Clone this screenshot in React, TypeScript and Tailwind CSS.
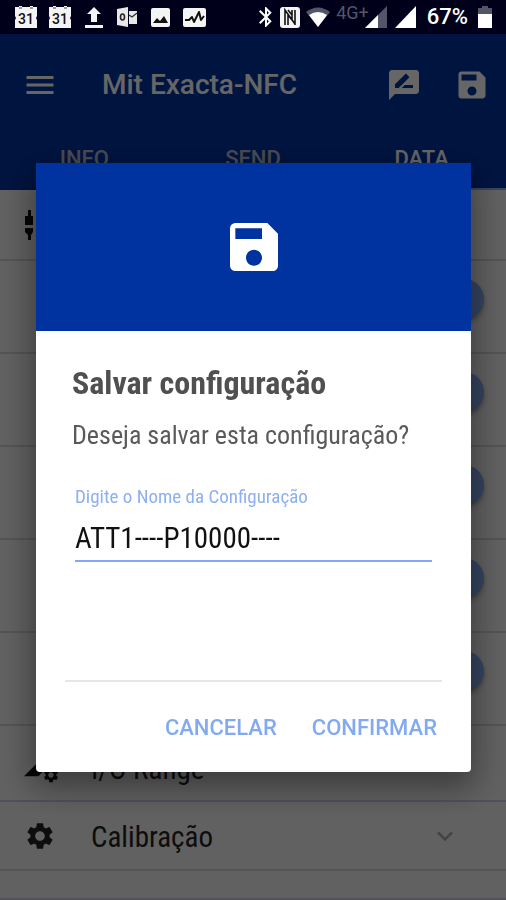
import React from 'react';
import { MdBluetooth, MdKeyboardArrowDown, MdMenu, MdRateReview, MdSave, MdSettings } from 'react-icons/md';

const CalendarIcon: React.FC = () => (
  <svg viewBox="0 0 24 24" className="size-6">
    <path fill="#f4f4f4" d="M1 2h4V1h3v1h8V1h3v1h4v9l-1 2 1 2v8H1v-8l1-2-1-2z" />
    <path fill="#999" d="M5 2h3v2H5zM16 2h3v2h-3z" />
    <text x="12" y="19" textAnchor="middle" fontSize="14" fontWeight="500" fill="#111">
      31
    </text>
  </svg>
);

const UploadIcon: React.FC = () => (
  <svg viewBox="0 0 20 24" className="h-6 w-5" fill="#f4f4f4">
    <path d="M10 2l7 7h-4v8H7V9H3zM1 20h18v3H1z" />
  </svg>
);

const MailIcon: React.FC = () => (
  <svg viewBox="0 0 22 24" className="h-6 w-[22px]">
    <path fill="#e8e8e8" d="M1 4l11-2v20L1 20zM13 6h8v13h-8z" />
    <path fill="none" stroke="#333" strokeWidth="1.4" d="M13 10l3 2 5-4" />
    <ellipse cx="6.5" cy="12" rx="2" ry="3" fill="none" stroke="#222" strokeWidth="1.6" />
  </svg>
);

const PictureIcon: React.FC = () => (
  <svg viewBox="0 0 20 24" className="h-6 w-5">
    <rect x="1" y="3" width="19" height="19" rx="2" fill="#f4f4f4" />
    <path fill="#111" d="M3 18l4-5 3 3 4-5 4 7z" />
  </svg>
);

const PulseIcon: React.FC = () => (
  <svg viewBox="0 0 24 24" className="size-6">
    <rect x="1" y="3" width="23" height="19" rx="2" fill="#f4f4f4" />
    <path fill="none" stroke="#111" strokeWidth="2" strokeLinejoin="round" d="M3 15h4l3-3 2 5 5-10 2 8 3-4" />
  </svg>
);

const NfcIcon: React.FC = () => (
  <svg viewBox="0 0 20 22" className="h-[22px] w-5">
    <rect y="1" width="20" height="21" rx="3" fill="#f4f4f4" />
    <path fill="none" stroke="#111" strokeWidth="1.6" d="M5 19V4l10 14M15 4v15M8 4l4 5v5l-4-5v10M12 4v5" />
  </svg>
);

const WifiIcon: React.FC = () => (
  <svg viewBox="0 0 24 20" className="h-5 w-6">
    <path fill="#55556a" d="M0 5Q12-4 24 5L12 20z" />
    <path fill="#fff" d="M3 8q9-6 18 0l-9 12z" />
  </svg>
);

const StatusBar: React.FC = () => (
  <div className="flex h-[34px] items-center justify-between bg-[#01001a] px-3.5 text-white">
    <div className="flex items-center gap-3">
      <div className="flex gap-2.5">
        <CalendarIcon />
        <CalendarIcon />
      </div>
      <UploadIcon />
      <MailIcon />
      <PictureIcon />
      <PulseIcon />
    </div>
    <div className="flex items-center">
      <MdBluetooth className="mr-0.5 size-6" />
      <NfcIcon />
      <div className="ml-1.5">
        <WifiIcon />
      </div>
      <span className="ml-1.5 self-start text-[18px] leading-4 text-[#55556a]">4G+</span>
      <svg viewBox="0 0 22 22" className="-ml-1 h-[22px] w-[22px]">
        <path fill="#55556a" d="M22 0v22H0z" />
        <path fill="#fff" d="M13 9v13H0z" />
      </svg>
      <svg viewBox="0 0 22 22" className="ml-2 h-[22px] w-[22px]">
        <path fill="#fff" d="M21 0v22H0z" />
      </svg>
      <span className="ml-2.5 text-[22px] leading-6 font-medium">67%</span>
      <svg viewBox="0 0 14 22" className="ml-2.5 h-[22px] w-3.5">
        <path fill="#55556a" d="M4 0h6v2h4v6H0V2h4z" />
        <path fill="#fff" d="M0 8h14v14H0z" />
      </svg>
    </div>
  </div>
);

const tabs = [
  { name: 'INFO', active: false },
  { name: 'SEND', active: false },
  { name: 'DATA', active: true },
];

const Header: React.FC = () => (
  <header className="bg-[#0033a0] text-white">
    <div className="flex h-[102px] items-center pr-4 pl-[22px]">
      <button aria-label="Menu">
        <MdMenu className="size-9" />
      </button>
      <h1 className="ml-11 flex-1 text-[28px] leading-8 font-medium">Mit Exacta-NFC</h1>
      <button aria-label="Renomear">
        <MdRateReview className="size-9" />
      </button>
      <button aria-label="Salvar" className="ml-8">
        <MdSave className="size-9" />
      </button>
    </div>
    <nav className="grid grid-cols-3">
      {tabs.map((tab) => (
        <a
          key={tab.name}
          href="#"
          className={
            tab.active
              ? 'flex h-[54px] justify-center border-b-2 border-[#8cb0f5] pt-[11px] text-[22px] leading-6 font-medium'
              : 'flex h-[54px] justify-center pt-[11px] text-[22px] leading-6 font-medium text-[#b4bccb]'
          }
        >
          {tab.name}
        </a>
      ))}
    </nav>
  </header>
);

const switches = ['Canal 1', 'Canal 2', 'Canal 3', 'Canal 4', 'Canal 5'];

const SettingsList: React.FC = () => (
  <main className="font-['Roboto_Condensed','Liberation_Sans_Narrow',Roboto,sans-serif] text-[#222]">
    <div className="flex h-[71px] items-center border-b-2 border-[#d2d2dc] pl-6">
      <svg viewBox="0 0 10 30" className="h-[30px] w-2.5" fill="#111">
        <path d="M4 0h3v6h2v9H1V6h3zM1 18h8v4l-2 3v5H4v-5l-3-3z" />
      </svg>
    </div>
    {switches.map((name) => (
      <div key={name} className="flex h-[93px] justify-end border-b-2 border-[#d2d2dc] pt-[18px] pr-[22px]">
        <input
          type="checkbox"
          defaultChecked
          aria-label={name}
          className="size-10 appearance-none rounded-full bg-[#82aaf0] shadow-md shadow-black/30"
        />
      </div>
    ))}
    <div className="flex h-[76px] items-center border-b-2 border-[#c8c8e8] pt-3 pl-6">
      <div className="flex w-[67px] items-end">
        <svg viewBox="0 0 20 20" className="size-[18px]" fill="#111">
          <path d="M0 18L16 2h4v12l-4 4z" />
        </svg>
        <MdSettings className="-mb-1.5 size-[18px] text-[#111]" />
      </div>
      <span className="text-[29px] leading-9">I/O Range</span>
    </div>
    <div className="flex h-[69px] items-center border-b-2 border-[#d2d2dc] pr-[45px] pl-6">
      <MdSettings className="size-8" />
      <span className="ml-[35px] flex-1 pt-0.5 text-[29px] leading-9">Calibração</span>
      <MdKeyboardArrowDown className="size-8 text-[#a8a8b4]" />
    </div>
    <div className="h-[29px] border-b-2 border-[#d2d2dc]" />
  </main>
);

const SaveDialog: React.FC = () => (
  <div className="fixed inset-x-0 top-[34px] bottom-0 flex items-center bg-black/60 pr-[35px] pl-9">
    <form
      role="dialog"
      aria-labelledby="dialog-title"
      className="w-full overflow-hidden rounded-b bg-white font-['Roboto_Condensed','Liberation_Sans_Narrow',Roboto,sans-serif] shadow-[0_12px_32px_4px_rgba(0,0,0,0.4)]"
    >
      <div className="flex h-[168px] items-center justify-center bg-[#0033a0] text-white">
        <MdSave className="size-16" />
      </div>
      <div className="px-9 pt-8">
        <h2 id="dialog-title" className="text-[32px] leading-10 font-bold text-[#505050]">
          Salvar configuração
        </h2>
        <p className="mt-4 text-[26px] leading-8 text-[#5a5a5a]">Deseja salvar esta configuração?</p>
        <div className="mt-[34px] flex flex-col px-[3px]">
          <label htmlFor="config-name" className="text-[19px] leading-6 text-[#8cb0f0]">
            Digite o Nome da Configuração
          </label>
          <input
            id="config-name"
            type="text"
            defaultValue="ATT1----P10000----"
            className="mt-2 h-[45px] border-b-2 border-[#82a9f2] text-[29px] leading-9 text-[#111] outline-none"
          />
        </div>
      </div>
      <div className="mx-[29px] mt-[118px] flex h-[92px] items-center justify-end gap-[35px] border-t-2 border-[#e6e6e6] pt-0.5 pr-[5px] font-[Roboto,sans-serif] text-[22px] leading-8 font-medium text-[#82aaf0]">
        <button type="button">CANCELAR</button>
        <button type="button">CONFIRMAR</button>
      </div>
    </form>
  </div>
);

const App: React.FC = () => {
  return (
    <div className="h-screen overflow-hidden bg-[#f2f2f2] font-[Roboto,sans-serif]">
      <StatusBar />
      <Header />
      <SettingsList />
      <SaveDialog />
    </div>
  );
};

export default App;
